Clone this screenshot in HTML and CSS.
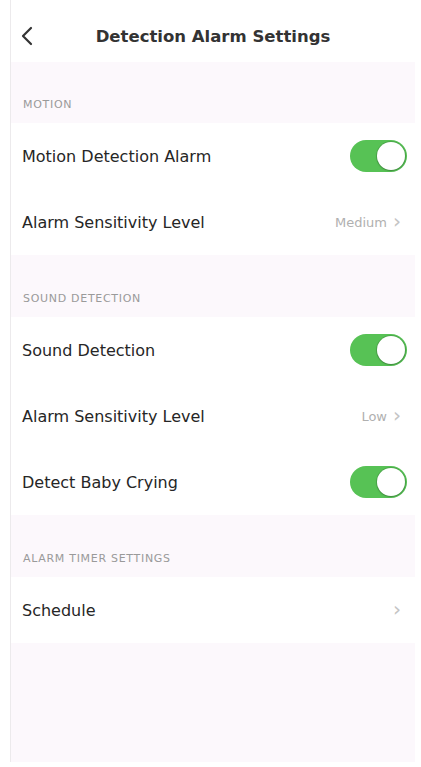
FILE: index.html
```html
<!DOCTYPE html>
<html lang="en">
<head>
<meta charset="UTF-8" />
<meta name="viewport" content="width=device-width, initial-scale=1" />
<title>Detection Alarm Settings</title>
<link rel="stylesheet" href="styles.css">
</head>
<body>

<div class="screen">
  <header class="topbar">
    <span class="back">
      <svg width="12" height="20" viewBox="0 0 12 20"><path d="M10 2 L2 10 L10 18" fill="none" stroke="#333" stroke-width="2.2" stroke-linecap="round" stroke-linejoin="round"/></svg>
    </span>
    <h1>Detection Alarm Settings</h1>
  </header>

  <div class="section-title first">Motion</div>
  <div class="group">
    <div class="row">
      <span class="label">Motion Detection Alarm</span>
      <span class="toggle on"><span class="knob"></span></span>
    </div>
    <div class="row">
      <span class="label">Alarm Sensitivity Level</span>
      <span class="value">Medium <i class="chev">›</i></span>
    </div>
  </div>

  <div class="section-title">Sound Detection</div>
  <div class="group">
    <div class="row">
      <span class="label">Sound Detection</span>
      <span class="toggle on"><span class="knob"></span></span>
    </div>
    <div class="row">
      <span class="label">Alarm Sensitivity Level</span>
      <span class="value">Low <i class="chev">›</i></span>
    </div>
    <div class="row">
      <span class="label">Detect Baby Crying</span>
      <span class="toggle on"><span class="knob"></span></span>
    </div>
  </div>

  <div class="section-title">Alarm Timer Settings</div>
  <div class="group">
    <div class="row">
      <span class="label">Schedule</span>
      <span class="value"><i class="chev">›</i></span>
    </div>
  </div>
</div>

</body>
</html>
```

FILE: styles.css
```css
body {
  margin: 0;
  background: #fff;
  font-family: "DejaVu Sans", "Liberation Sans", sans-serif;
  color: #222;
}
.screen {
  margin-left: 10px;
  width: 405px;
  height: 762px;
  background: #fcf8fc;
  border-left: 1px solid #eceaec;
  box-sizing: border-box;
}
.topbar {
  height: 62px;
  background: #fff;
  display: flex;
  align-items: center;
  justify-content: center;
  padding-top: 10px;
  box-sizing: border-box;
  position: relative;
}
.back {
  position: absolute;
  left: 10px;
  top: 26px;
}
.topbar h1 {
  margin: 0;
  font-size: 16.5px;
  font-weight: bold;
  color: #333;
}
.section-title {
  height: 62px;
  box-sizing: border-box;
  padding: 0 12px 12px;
  display: flex;
  align-items: flex-end;
  font-size: 11px;
  letter-spacing: 0.7px;
  text-transform: uppercase;
  color: #9a9a9a;
}
.section-title.first {
  height: 61px;
}
.group {
  background: #fff;
}
.row {
  height: 66px;
  display: flex;
  align-items: center;
  justify-content: space-between;
  padding: 0 8px 0 11px;
}
.label {
  font-size: 16px;
  color: #262626;
}
.value {
  font-size: 13px;
  color: #b0b0b0;
  display: flex;
  align-items: center;
  gap: 6px;
  padding-right: 6px;
}
.chev {
  font-style: normal;
  font-size: 20px;
  color: #c4c4c4;
  line-height: 1;
  margin-top: -3px;
}
.toggle {
  width: 57px;
  height: 32px;
  border-radius: 16px;
  background: #e6e6e6;
  display: flex;
  align-items: center;
  padding: 2px;
  box-sizing: border-box;
}
.toggle.on {
  background: #57c255;
  justify-content: flex-end;
}
.knob {
  width: 28px;
  height: 28px;
  border-radius: 50%;
  background: #fff;
  box-shadow: 0 0 0 1px rgba(0,0,0,0.12), 0 1px 2px rgba(0,0,0,0.2);
}
```
